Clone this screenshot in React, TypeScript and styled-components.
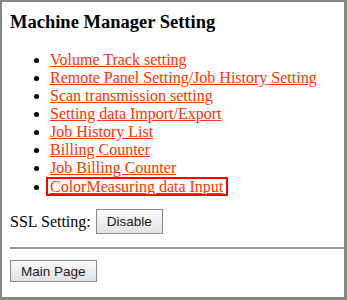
import React from 'react'
import styled, { createGlobalStyle } from 'styled-components'

const GlobalStyle = createGlobalStyle`
  html, body {
    margin: 0;
    padding: 0;
    background: #ffffff;
  }
`

const Frame = styled.div`
  box-sizing: border-box;
  width: 347px;
  height: 300px;
  border-style: solid;
  border-color: #878787;
  border-width: 2px 3px 3px 2px;
  font-family: 'Liberation Serif', 'Times New Roman', serif;
  font-size: 16px;
  color: #000;
  overflow: hidden;
`

const Section = styled.div`
  padding: 0 8px;
`

const Title = styled.h3`
  margin: 10px 0 0;
  font-size: 18.5px;
  font-weight: bold;
`

const MenuList = styled.ul`
  margin: 18px 0 0;
  padding-left: 40px;
  line-height: 18px;
`

const MenuItem = styled.li``

const MenuLink = styled.a<{ $active?: boolean }>`
  color: #ff3300;
  text-decoration: underline;
  ${({ $active }) =>
    $active &&
    `
    display: inline-block;
    border: 2px solid #ff0000;
    padding: 0 3px 0 2px;
    margin-left: -4px;
    line-height: 15px;
  `}
`

const SslRow = styled.div`
  display: flex;
  align-items: center;
  gap: 5px;
  margin-top: 13px;
`

const GrayButton = styled.button<{ $tall?: boolean }>`
  box-sizing: border-box;
  height: ${({ $tall }) => ($tall ? '25px' : '22px')};
  padding: 0 10px;
  font-family: 'Liberation Sans', Arial, sans-serif;
  font-size: 13.5px;
  color: #1a1a1a;
  border: 1px solid #8a8a8a;
  border-radius: 0;
  background: linear-gradient(#fbfbfb, #e2e2e2);
`

const Divider = styled.hr`
  margin: 13px 0 11px 8px;
  border: none;
  border-top: 2px solid #999999;
`

const menu = [
  'Volume Track setting',
  'Remote Panel Setting/Job History Setting',
  'Scan transmission setting',
  'Setting data Import/Export',
  'Job History List',
  'Billing Counter',
  'Job Billing Counter',
  'ColorMeasuring data Input',
]

const App = () => {
  return (
    <>
      <GlobalStyle />
      <Frame>
        <Section>
          <Title>Machine Manager Setting</Title>
          <MenuList>
            {menu.map((label, i) => (
              <MenuItem key={label}>
                <MenuLink href="#" $active={i === menu.length - 1}>
                  {label}
                </MenuLink>
              </MenuItem>
            ))}
          </MenuList>
          <SslRow>
            SSL Setting:
            <GrayButton $tall>Disable</GrayButton>
          </SslRow>
        </Section>
        <Divider />
        <Section>
          <GrayButton>Main Page</GrayButton>
        </Section>
      </Frame>
    </>
  )
}

export default App
